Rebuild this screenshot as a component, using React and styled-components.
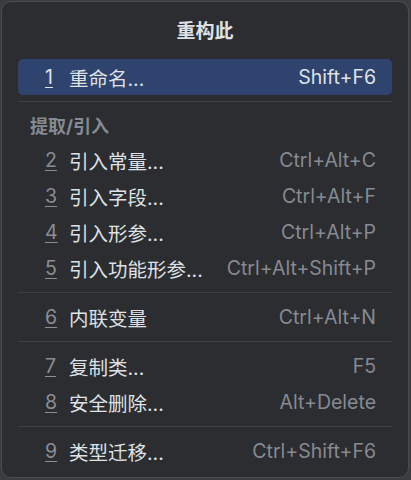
import React from 'react'
import styled, { createGlobalStyle } from 'styled-components'

const GlobalStyle = createGlobalStyle`
  html, body {
    margin: 0;
    padding: 0;
    background: #3a3c3f;
  }
  * { box-sizing: border-box; }
`

const items = [
  { type: 'item', n: '1', label: '重命名...', keys: 'Shift+F6', selected: true },
  { type: 'sep' },
  { type: 'header', label: '提取/引入' },
  { type: 'item', n: '2', label: '引入常量...', keys: 'Ctrl+Alt+C' },
  { type: 'item', n: '3', label: '引入字段...', keys: 'Ctrl+Alt+F' },
  { type: 'item', n: '4', label: '引入形参...', keys: 'Ctrl+Alt+P' },
  { type: 'item', n: '5', label: '引入功能形参...', keys: 'Ctrl+Alt+Shift+P' },
  { type: 'sep' },
  { type: 'item', n: '6', label: '内联变量', keys: 'Ctrl+Alt+N' },
  { type: 'sep' },
  { type: 'item', n: '7', label: '复制类...', keys: 'F5' },
  { type: 'item', n: '8', label: '安全删除...', keys: 'Alt+Delete' },
  { type: 'sep' },
  { type: 'item', n: '9', label: '类型迁移...', keys: 'Ctrl+Shift+F6' },
]

const Page = styled.div`
  width: 411px;
  height: 480px;
  padding: 1px 2px 2px 1px;
`

const Popup = styled.div`
  height: 100%;
  background: #2b2d30;
  border: 1px solid #4b4d52;
  border-radius: 10px;
  padding: 0 16px;
  font-family: Inter, "Noto Sans CJK SC", sans-serif;
  font-size: 19.5px;
  color: #dfe1e5;
  display: flex;
  flex-direction: column;
`

const Title = styled.div`
  height: 57px;
  display: flex;
  align-items: center;
  justify-content: center;
  font-weight: 700;
  font-size: 19px;
  padding-bottom: 2px;
`

const Row = styled.div`
  height: 36px;
  display: flex;
  align-items: center;
  padding: 0 16px 0 27px;
  border-radius: 5px;
  background: ${p => (p.$selected ? '#2e436e' : 'transparent')};
`

const Num = styled.span`
  width: 24px;
  color: ${p => (p.$selected ? '#dfe1e5' : '#8b8e94')};
  text-decoration: underline;
  text-decoration-thickness: 1px;
  text-underline-offset: 3px;
`

const Label = styled.span`
  flex: 1;
  white-space: nowrap;
`

const Keys = styled.span`
  color: ${p => (p.$selected ? '#dfe1e5' : '#868a91')};
  white-space: nowrap;
`

const Separator = styled.div`
  height: 13px;
  display: flex;
  align-items: center;
  &::after {
    content: '';
    flex: 1;
    height: 1px;
    background: #3c3f44;
  }
`

const Header = styled.div`
  height: 34px;
  display: flex;
  align-items: center;
  padding: 0 0 0 12px;
  color: #868a91;
  font-weight: 700;
  font-size: 18px;
`

export default function App() {
  return (
    <Page>
      <GlobalStyle />
      <Popup>
        <Title>重构此</Title>
        {items.map((it, i) => {
          if (it.type === 'sep') return <Separator key={i} />
          if (it.type === 'header') return <Header key={i}>{it.label}</Header>
          return (
            <Row key={i} $selected={it.selected}>
              <Num $selected={it.selected}>{it.n}</Num>
              <Label>{it.label}</Label>
              <Keys $selected={it.selected}>{it.keys}</Keys>
            </Row>
          )
        })}
      </Popup>
    </Page>
  )
}
